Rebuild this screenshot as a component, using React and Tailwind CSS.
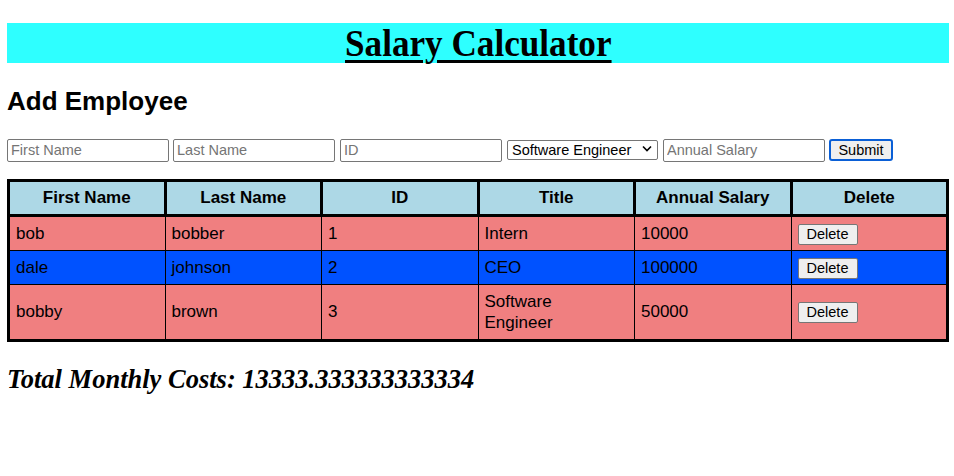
import React from "react";

const employees = [
  { first: "bob", last: "bobber", id: 1, title: "Intern", salary: 10000, bg: "bg-[#f07f80]" },
  { first: "dale", last: "johnson", id: 2, title: "CEO", salary: 100000, bg: "bg-[#0052ff]" },
  { first: "bobby", last: "brown", id: 3, title: "Software Engineer", salary: 50000, bg: "bg-[#f07f80]" },
];

const inputCls =
  "w-[162px] h-[23px] border border-[#767676] rounded-[2px] px-[3px] text-[14.5px] text-black placeholder:text-[#757575] bg-white";

const App = () => {
  return (
    <div className="pl-[7px] pr-[5px] pt-[23px] text-black font-['Liberation_Sans',Arial,sans-serif]">
      {/* Header */}
      <h1 className="h-[40px] bg-[#2effff] flex items-center justify-center">
        <span className="inline-block scale-x-[0.95] font-['Liberation_Serif','Times_New_Roman',serif] font-bold text-[37px] underline underline-offset-[4px] decoration-[3px] leading-none">
          Salary Calculator
        </span>
      </h1>

      <h2 className="mt-[23px] text-[26px] font-bold leading-[30px]">Add Employee</h2>

      {/* Form */}
      <form className="mt-[22px] flex items-center gap-[4px]" onSubmit={(e) => e.preventDefault()}>
        <input className={inputCls} placeholder="First Name" />
        <input className={inputCls} placeholder="Last Name" />
        <input className={`${inputCls} ml-[1px]`} placeholder="ID" />
        <div className="relative ml-[1px]">
          <select
            defaultValue="Software Engineer"
            className="appearance-none w-[151px] h-[20px] border border-[#767676] rounded-[2px] pl-[4px] text-[14.5px] leading-none bg-white"
          >
            <option>Intern</option>
            <option>CEO</option>
            <option>Software Engineer</option>
          </select>
          <svg
            className="absolute right-[6px] top-[7px] pointer-events-none"
            width="10"
            height="7"
            viewBox="0 0 10 7"
          >
            <path d="M1 1.5 L5 5.5 L9 1.5" fill="none" stroke="black" strokeWidth="1.6" />
          </svg>
        </div>
        <input className={`${inputCls} ml-[1px]`} placeholder="Annual Salary" />
        <button
          type="submit"
          className="h-[22px] w-[64px] border-2 border-[#0a5fd6] rounded-[3px] bg-[#efefef] text-[14.5px] leading-none"
        >
          Submit
        </button>
      </form>

      {/* Table */}
      <table className="mt-[17px] w-full border-collapse border-[3px] border-black table-fixed text-[17px]">
        <thead>
          <tr className="bg-[#add8e6]">
            {["First Name", "Last Name", "ID", "Title", "Annual Salary", "Delete"].map((h) => (
              <th key={h} className="h-[35px] p-0 border-[3px] border-black font-bold text-center">
                {h}
              </th>
            ))}
          </tr>
        </thead>
        <tbody>
          {employees.map((e) => (
            <tr key={e.id} className={e.bg}>
              <td className="border border-black px-[6px] py-0 h-[34px]">{e.first}</td>
              <td className="border border-black px-[6px] py-0">{e.last}</td>
              <td className="border border-black px-[6px] py-0">{e.id}</td>
              <td className="border border-black px-[6px] py-[6px] leading-[21px]">
                <span className="inline-block max-w-[125px]">{e.title}</span>
              </td>
              <td className="border border-black px-[6px] py-0">{e.salary}</td>
              <td className="border border-black px-[6px] py-0">
                <button className="h-[21px] w-[60px] bg-[#efefef] border border-[#767676] rounded-[2px] text-[14.5px] leading-none">
                  Delete
                </button>
              </td>
            </tr>
          ))}
        </tbody>
      </table>

      <h3 className="mt-[22px] font-['Liberation_Serif','Times_New_Roman',serif] italic font-bold text-[26.5px] leading-[30px]">
        Total Monthly Costs: 13333.333333333334
      </h3>
    </div>
  );
};

export default App;
